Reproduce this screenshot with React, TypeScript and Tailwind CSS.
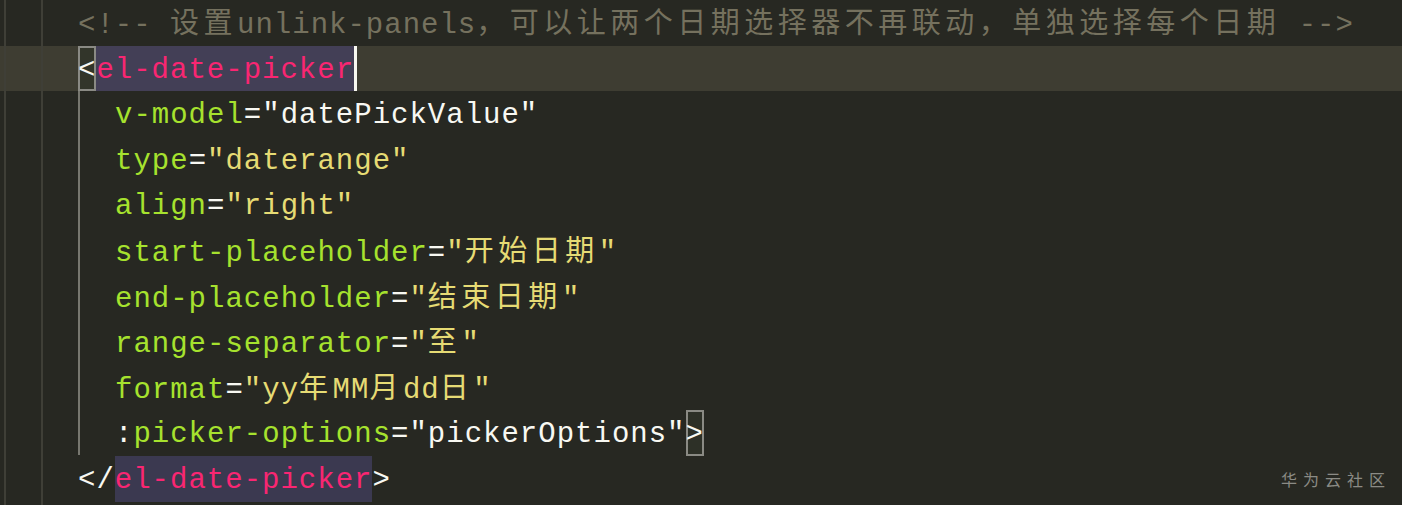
import React from 'react';

const CJK = /([\u2E80-\u9FFF\u3000-\u303F\uFF00-\uFFEF]+)/;

// wraps runs of CJK text so they get the wider advance the editor gives them
const Txt: React.FC<{ s: string }> = ({ s }) => (
  <>
    {s.split(CJK).map((part, i) =>
      CJK.test(part) ? (
        <span key={i} className="font-['Noto_Sans_CJK_SC',sans-serif] text-[29px] leading-[36px] tracking-[4.5px]">
          {part}
        </span>
      ) : (
        <React.Fragment key={i}>{part}</React.Fragment>
      )
    )}
  </>
);

const colors = {
  plain: 'text-[#f8f8f2]',
  tag: 'text-[#f92672]',
  attr: 'text-[#a6e22e]',
  str: 'text-[#e6db74]',
  comment: 'text-[#75715e]',
};

type Tok = [keyof typeof colors, string];

const Toks: React.FC<{ toks: Tok[] }> = ({ toks }) => (
  <>
    {toks.map(([c, s], i) => (
      <span key={i} className={colors[c]}>
        <Txt s={s} />
      </span>
    ))}
  </>
);

const Line: React.FC<{ indent?: 1 | 2; children: React.ReactNode }> = ({ indent = 1, children }) => (
  <div className={`h-[45.6px] whitespace-pre ${indent === 2 ? 'pl-[115px]' : 'pl-[78px]'}`}>
    <div className="h-[45.6px] pt-[2px]">{children}</div>
  </div>
);

const attrs: Tok[][] = [
  [['attr', 'v-model'], ['plain', '="datePickValue"']],
  [['attr', 'type'], ['plain', '='], ['str', '"daterange"']],
  [['attr', 'align'], ['plain', '='], ['str', '"right"']],
  [['attr', 'start-placeholder'], ['plain', '='], ['str', '"开始日期"']],
  [['attr', 'end-placeholder'], ['plain', '='], ['str', '"结束日期"']],
  [['attr', 'range-separator'], ['plain', '='], ['str', '"至"']],
  [['attr', 'format'], ['plain', '='], ['str', '"yy年MM月dd日"']],
];

export default function App() {
  return (
    <div className="relative w-[1402px] h-[505px] overflow-hidden bg-[#272822] font-['Liberation_Mono',monospace] text-[29px] tracking-[1px] leading-[45.6px]">
      <Line>
        <Toks toks={[['comment', '<!-- 设置unlink-panels，可以让两个日期选择器不再联动，单独选择每个日期 -->']]} />
      </Line>
      <div className="h-[45.6px] pl-[78px] bg-[#3e3d32] whitespace-pre flex items-stretch">
        <span className="h-[45.6px] pt-[2px] bg-[#32352a] shadow-[inset_0_0_0_2px_#8a8a84] text-[#f8f8f2]">
          {'<'}
        </span>
        <span className="h-[45.6px] pt-[2px] bg-[#433f56] text-[#f92672]">el-date-picker</span>
        <span className="h-[45.6px] w-[3px] bg-[#f8f8f0]" />
      </div>
      {attrs.map((toks, i) => (
        <Line key={i} indent={2}>
          <Toks toks={toks} />
        </Line>
      ))}
      <div className="h-[45.6px] pl-[115px] whitespace-pre flex items-stretch">
        <span className="pt-[2px]">
          <Toks toks={[['plain', ':'], ['attr', 'picker-options'], ['plain', '="pickerOptions"']]} />
        </span>
        <span className="pt-[2px] bg-[#2d3027] shadow-[inset_0_0_0_2px_#8a8a84] text-[#f8f8f2]">{'>'}</span>
      </div>
      <div className="h-[45.6px] pl-[78px] whitespace-pre flex items-stretch">
        <span className="pt-[2px] text-[#f8f8f2]">{'</'}</span>
        <span className="pt-[2px] bg-[#3b3950] text-[#f92672]">el-date-picker</span>
        <span className="pt-[2px] text-[#f8f8f2]">{'>'}</span>
      </div>

      {/* indent guides drawn over the lines */}
      <div className="absolute left-[4px] top-0 bottom-0 w-[2px] bg-[#3f3f37]" />
      <div className="absolute left-[41px] top-0 bottom-0 w-[2px] bg-[#3f3f37]" />
      <div className="absolute left-[78px] top-[91px] h-[364px] w-[2px] bg-[#77776f]" />

      <div className="absolute right-[11px] top-[467px] font-['Noto_Sans_CJK_SC',sans-serif] text-[16px] leading-[24px] tracking-[6px] text-[#8b8b85]">
        华为云社区
      </div>
    </div>
  );
}
